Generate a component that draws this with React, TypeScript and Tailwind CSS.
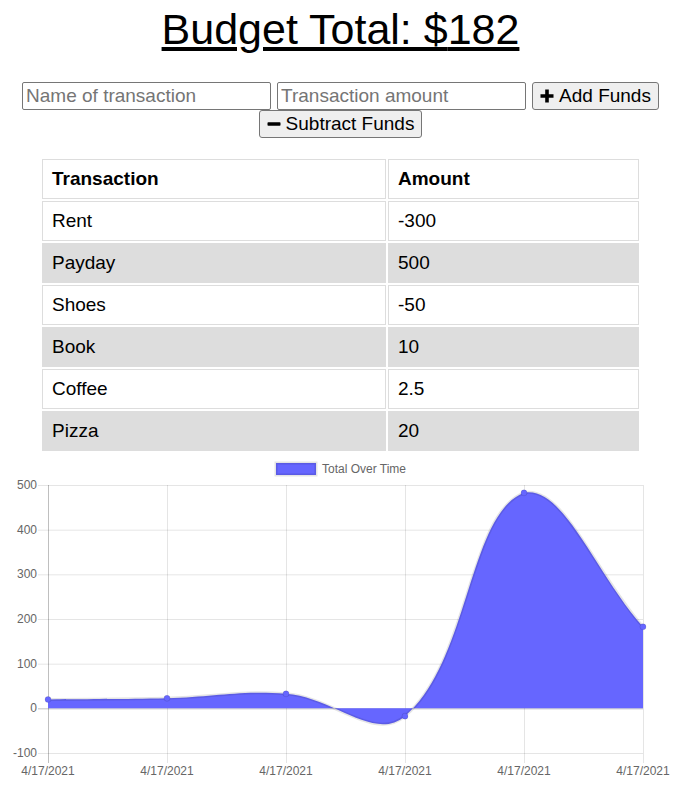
import React from 'react';

const transactions = [
  { name: 'Rent', value: -300 },
  { name: 'Payday', value: 500 },
  { name: 'Shoes', value: -50 },
  { name: 'Book', value: 10 },
  { name: 'Coffee', value: 2.5 },
  { name: 'Pizza', value: 20 },
];

// chart area in svg coords (svg starts right under the table)
const left = 48;
const right = 643;
const top = 32;
const bottom = 300;
const yTicks = [500, 400, 300, 200, 100, 0, -100];

const yPos = (v: number) => top + ((500 - v) * (bottom - top)) / 600;

type Pt = { x: number; y: number };

// same spline as chart.js 2 (tension 0.4)
const curve = (pts: Pt[]) => {
  const t = 0.4;
  const clamp = (v: number, a: number, b: number) => Math.max(a, Math.min(b, v));
  const ctrl = pts.map((p, i) => {
    const prev = pts[i - 1] ?? p;
    const next = pts[i + 1] ?? p;
    const d01 = Math.hypot(p.x - prev.x, p.y - prev.y);
    const d12 = Math.hypot(next.x - p.x, next.y - p.y);
    const s01 = d01 / (d01 + d12) || 0;
    const s12 = d12 / (d01 + d12) || 0;
    return {
      px: clamp(p.x - t * s01 * (next.x - prev.x), left, right),
      py: clamp(p.y - t * s01 * (next.y - prev.y), top, bottom),
      nx: clamp(p.x + t * s12 * (next.x - prev.x), left, right),
      ny: clamp(p.y + t * s12 * (next.y - prev.y), top, bottom),
    };
  });
  let d = `M${pts[0].x} ${pts[0].y}`;
  for (let i = 1; i < pts.length; i++) {
    d += ` C${ctrl[i - 1].nx} ${ctrl[i - 1].ny} ${ctrl[i].px} ${ctrl[i].py} ${pts[i].x} ${pts[i].y}`;
  }
  return d;
};

const Chart = () => {
  let sum = 0;
  const totals = [...transactions].reverse().map((t) => (sum += t.value));
  const step = (right - left) / (totals.length - 1);
  const pts = totals.map((v, i) => ({ x: left + i * step, y: yPos(v) }));
  const line = curve(pts);
  const zero = yPos(0);
  const area = `${line} L${right} ${zero} L${left} ${zero} Z`;

  return (
    <svg width="681" height="340" className="block" fontFamily="'Liberation Sans', Arial, sans-serif">
      <rect x="276" y="10" width="40" height="12" fill="#6666ff" stroke="rgba(0,0,0,0.1)" strokeWidth="3" />
      <text x="322" y="16" fontSize="12" fill="#666" dominantBaseline="central">
        Total Over Time
      </text>

      {yTicks.map((v) => (
        <g key={v}>
          <line
            x1={left - 10}
            x2={right}
            y1={yPos(v) + 0.5}
            y2={yPos(v) + 0.5}
            stroke={v === 0 ? 'rgba(0,0,0,0.25)' : 'rgba(0,0,0,0.1)'}
          />
          <text x={left - 11} y={yPos(v)} fontSize="12" fill="#666" textAnchor="end" dominantBaseline="central">
            {v}
          </text>
        </g>
      ))}

      {pts.map((p, i) => (
        <g key={i}>
          <line
            x1={p.x + 0.5}
            x2={p.x + 0.5}
            y1={top}
            y2={bottom + 10}
            stroke={i === 0 ? 'rgba(0,0,0,0.25)' : 'rgba(0,0,0,0.1)'}
          />
          <text x={p.x} y={bottom + 18} fontSize="12" fill="#666" textAnchor="middle" dominantBaseline="central">
            4/17/2021
          </text>
        </g>
      ))}

      <path d={area} fill="#6666ff" />
      <path d={line} fill="none" stroke="rgba(0,0,0,0.1)" strokeWidth="3" />
      {pts.map((p, i) => (
        <circle key={i} cx={p.x} cy={p.y} r="3" fill="#6666ff" stroke="rgba(0,0,0,0.1)" />
      ))}
    </svg>
  );
};

const PlusIcon = () => (
  <svg width="14" height="14" viewBox="0 0 14 14">
    <path d="M5.2 0.5h3.6v4.7h4.7v3.6H8.8v4.7H5.2V8.8H0.5V5.2h4.7z" fill="black" />
  </svg>
);

const MinusIcon = () => (
  <svg width="14" height="14" viewBox="0 0 14 14">
    <rect x="0.5" y="5.2" width="13" height="3.6" rx="0.8" fill="black" />
  </svg>
);

export default function App() {
  let sum = 0;
  transactions.forEach((t) => (sum += t.value));

  return (
    <div className="min-h-screen bg-white text-black font-['Liberation_Sans',Arial,sans-serif]">
      <h1 className="pt-[5px] text-center text-[43px] leading-[49px] underline">Budget Total: ${Math.floor(sum)}</h1>

      <div className="mt-[28px] flex flex-wrap justify-center gap-x-[6px]">
        <input
          placeholder="Name of transaction"
          className="h-[28px] w-[249px] rounded-[2px] border border-[#767676] px-[3px] text-[19px] placeholder:text-[#757575]"
        />
        <input
          placeholder="Transaction amount"
          className="h-[28px] w-[249px] rounded-[2px] border border-[#767676] px-[3px] text-[19px] placeholder:text-[#757575]"
        />
        <button className="flex h-[28px] items-center gap-[5px] rounded-[3px] border border-[#767676] bg-[#efefef] px-[7px] text-[19px]">
          <PlusIcon />
          Add Funds
        </button>
        <button className="flex h-[28px] items-center gap-[5px] rounded-[3px] border border-[#767676] bg-[#efefef] px-[7px] text-[19px]">
          <MinusIcon />
          Subtract Funds
        </button>
      </div>

      <table className="mx-auto mt-[19px] w-[601px] table-fixed border-separate border-spacing-[2px] text-[19px] leading-[22px]">
        <thead>
          <tr>
            <th className="w-[344px] border border-[#dddddd] px-[9px] py-2 text-left font-bold">Transaction</th>
            <th className="border border-[#dddddd] px-[9px] py-2 text-left font-bold">Amount</th>
          </tr>
        </thead>
        <tbody>
          {transactions.map((t, i) => (
            <tr key={t.name} className={i % 2 === 1 ? 'bg-[#dddddd]' : ''}>
              <td className="border border-[#dddddd] px-[9px] py-2">{t.name}</td>
              <td className="border border-[#dddddd] px-[9px] py-2">{t.value}</td>
            </tr>
          ))}
        </tbody>
      </table>

      <Chart />
    </div>
  );
}
